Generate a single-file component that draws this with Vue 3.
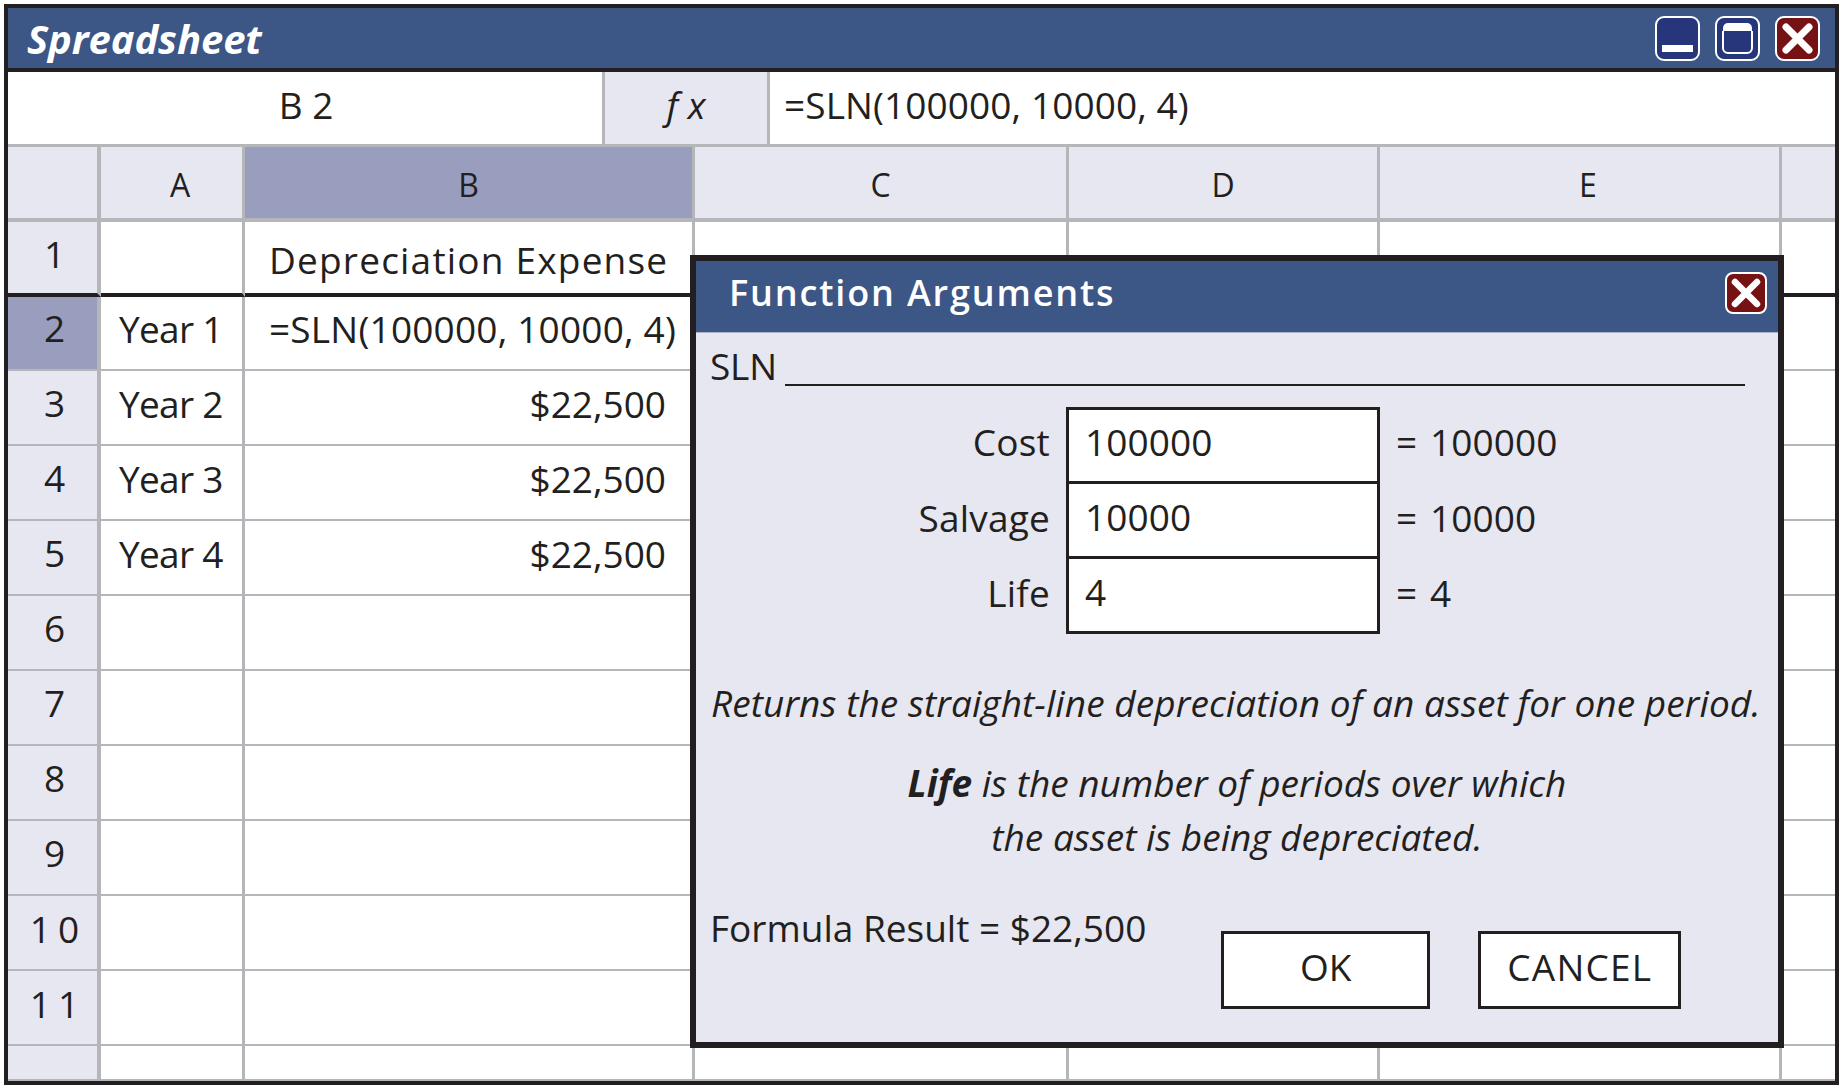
<script setup>
const cols = ['A', 'B', 'C', 'D', 'E', '']
const rows = [
  { n: '1', a: '', b: 'Depreciation Expense', kind: 'head' },
  { n: '2', a: 'Year 1', b: '=SLN(100000, 10000, 4)', kind: 'formula' },
  { n: '3', a: 'Year 2', b: '$22,500', kind: 'value' },
  { n: '4', a: 'Year 3', b: '$22,500', kind: 'value' },
  { n: '5', a: 'Year 4', b: '$22,500', kind: 'value' },
  { n: '6', a: '', b: '', kind: '' },
  { n: '7', a: '', b: '', kind: '' },
  { n: '8', a: '', b: '', kind: '' },
  { n: '9', a: '', b: '', kind: '' },
  { n: '10', a: '', b: '', kind: '' },
  { n: '11', a: '', b: '', kind: '' },
  { n: '', a: '', b: '', kind: '' }
]
const args = [
  { label: 'Cost', value: '100000' },
  { label: 'Salvage', value: '10000' },
  { label: 'Life', value: '4' }
]
</script>

<template>
  <div class="frame">
    <header class="titlebar">
      <span class="title">Spreadsheet</span>
      <div class="winbtns">
        <svg class="winbtn" viewBox="0 0 45 45"><rect x="1" y="1" width="43" height="43" rx="8" fill="#27367a" stroke="#fff" stroke-width="2"/><rect x="7" y="29" width="31" height="7" fill="#fff"/></svg>
        <svg class="winbtn" viewBox="0 0 45 45"><rect x="1" y="1" width="43" height="43" rx="8" fill="#27367a" stroke="#fff" stroke-width="2"/><path d="M8 15V12a5 5 0 0 1 5-5H32a5 5 0 0 1 5 5V15Z" fill="#fff"/><path d="M8 15V32a5 5 0 0 0 5 5H32a5 5 0 0 0 5-5V15" fill="none" stroke="#fff" stroke-width="2"/></svg>
        <svg class="winbtn" viewBox="0 0 45 45"><rect x="1" y="1" width="43" height="43" rx="8" fill="#771214" stroke="#fff" stroke-width="2"/><path d="M11 11L34 34M34 11L11 34" stroke="#fff" stroke-width="7" stroke-linecap="round"/></svg>
      </div>
    </header>

    <div class="formulabar">
      <div class="namebox">B 2</div>
      <div class="fx">f x</div>
      <div class="formula">=SLN(100000, 10000, 4)</div>
    </div>

    <div class="sheet">
      <div class="cell rowhead corner"></div>
      <div
        v-for="c in cols"
        :key="c"
        class="cell colhead"
        :class="{ selected: c === 'B', last: c === '', nudged: c === 'A' || c === 'E' }"
      >{{ c }}</div>

      <template v-for="r in rows" :key="r.n">
        <div class="cell rowhead" :class="{ selected: r.n === '2', first: r.n === '1', wide: r.n.length > 1 }">{{ r.n }}</div>
        <div class="cell body" :class="{ first: r.n === '1', second: r.n === '2' }"><span class="yeartext">{{ r.a }}</span></div>
        <div class="cell body colb" :class="[r.kind, { first: r.n === '1', second: r.n === '2' }]">{{ r.b }}</div>
        <div class="cell body" :class="{ first: r.n === '1' }"></div>
        <div class="cell body" :class="{ first: r.n === '1' }"></div>
        <div class="cell body" :class="{ first: r.n === '1' }"></div>
        <div class="cell body last" :class="{ first: r.n === '1' }"></div>
      </template>
    </div>

    <section class="dialog">
      <header class="dlgtitle">
        <span>Function Arguments</span>
        <svg class="dlgclose" viewBox="0 0 42 42"><rect x="1" y="1" width="40" height="40" rx="7" fill="#771214" stroke="#fff" stroke-width="2"/><path d="M10 10L32 32M32 10L10 32" stroke="#fff" stroke-width="6.5" stroke-linecap="round"/></svg>
      </header>
      <div class="dlgbody">
        <div class="slnrow"><span class="slntext">SLN</span><i class="rule"></i></div>
        <div class="args">
          <template v-for="(a, i) in args" :key="a.label">
            <label class="arglabel">{{ a.label }}</label>
            <div class="argbox" :class="{ notfirst: i > 0 }">{{ a.value }}</div>
            <div class="argval">= {{ a.value }}</div>
          </template>
        </div>
        <p class="desc">Returns the straight-line depreciation of an asset for one period.</p>
        <p class="life"><b>Life</b> is the number of periods over which<br>the asset is being depreciated.</p>
        <div class="footer">
          <span class="result">Formula Result = $22,500</span>
          <div class="actions">
            <button class="btn ok">OK</button>
            <button class="btn cancel">CANCEL</button>
          </div>
        </div>
      </div>
    </section>
  </div>
</template>

<style scoped>
.frame {
  position: relative;
  box-sizing: border-box;
  width: 1835px;
  height: 1081px;
  margin: 4px 0 0 4px;
  border: 4px solid #231f20;
  background: #fff;
  color: #231f20;
  font-family: "Open Sans", "Noto Sans", sans-serif;
  overflow: hidden;
}
.titlebar {
  box-sizing: border-box;
  height: 64px;
  border-bottom: 4px solid #231f20;
  background: #3c5686;
  display: flex;
  align-items: center;
  justify-content: space-between;
  padding: 0 15px 0 19px;
}
.title {
  color: #fff;
  font-size: 40px;
  font-weight: 700;
  font-style: italic;
  letter-spacing: -0.1px;
}
.winbtns { display: flex; gap: 15px; }
.winbtn { width: 45px; height: 45px; display: block; }
.formulabar {
  box-sizing: border-box;
  height: 75px;
  border-bottom: 3px solid #b5b6ba;
  display: flex;
  font-size: 37px;
}
.namebox {
  box-sizing: border-box;
  width: 597px;
  border-right: 3px solid #b5b6ba;
  display: flex;
  align-items: center;
  justify-content: center;
  padding: 0 0 8px 2px;
}
.fx {
  box-sizing: border-box;
  width: 165px;
  border-right: 3px solid #b5b6ba;
  background: #e6e7f1;
  display: flex;
  align-items: center;
  justify-content: center;
  font-style: italic;
  padding-bottom: 8px;
}
.formula {
  display: flex;
  align-items: center;
  padding: 0 0 8px 14px;
  letter-spacing: 0.1px;
}
.sheet {
  display: grid;
  grid-template-columns: 93px 144px 450px 374px 311px 402px 53px;
  grid-template-rows: 75px 75px 74px repeat(9, 75px) 35px;
}
.cell {
  box-sizing: border-box;
  display: flex;
  align-items: center;
  font-size: 37px;
  border-right: 3px solid #b5b6ba;
  border-bottom: 2px solid #b5b6ba;
  min-width: 0;
  white-space: nowrap;
}
.colhead {
  background: #e6e7f1;
  justify-content: center;
  font-size: 32px;
  border-bottom-width: 4px;
  padding-top: 4px;
}
.colhead.nudged { padding-left: 17px; }
.colhead.selected { background: #999dbe; }
.rowhead {
  background: #e6e7f1;
  justify-content: center;
  border-right-width: 4px;
  padding-left: 4px;
  padding-bottom: 10px;
}
.rowhead.corner { border-bottom-width: 4px; padding: 0; }
.rowhead.selected { background: #999dbe; padding-bottom: 12px; }
.rowhead.wide { letter-spacing: 7px; padding-left: 11px; padding-bottom: 8px; }
.rowhead.first { border-bottom: 4px solid #231f20; padding-bottom: 8px; }
.body { padding-bottom: 8px; }
.body.second { padding-bottom: 9px; }
.body.first { border-bottom: 4px solid #231f20; padding-bottom: 0; }
.last { border-right: 0; }
.yeartext { padding-left: 18px; letter-spacing: -0.7px; }
.colb { padding-left: 24px; padding-right: 26px; }
.colb.head { letter-spacing: 1.2px; padding-top: 4px; }
.colb.formula { letter-spacing: 0.2px; padding-left: 24px; }
.colb.value { justify-content: flex-end; letter-spacing: 0; }
.dialog {
  position: absolute;
  left: 682px;
  top: 247px;
  box-sizing: border-box;
  width: 1094px;
  height: 793px;
  border: 6px solid #231f20;
  background: #e6e7f1;
  display: flex;
  flex-direction: column;
}
.dlgtitle {
  box-sizing: border-box;
  height: 72px;
  flex: none;
  background: #3c5686;
  border-bottom: 1px solid #aeb4ca;
  color: #fff;
  display: flex;
  align-items: center;
  justify-content: space-between;
  padding: 0 11px 0 33px;
  font-size: 36px;
  font-weight: 600;
  letter-spacing: 1.85px;
}
.dlgtitle span { margin-bottom: 8px; }
.dlgclose { width: 42px; height: 42px; display: block; margin-bottom: 7px; }
.dlgbody {
  flex: 1;
  display: flex;
  flex-direction: column;
  font-size: 37px;
  padding: 0 14px 0 14px;
}
.slnrow {
  display: flex;
  align-items: flex-end;
  height: 53px;
  gap: 8px;
  letter-spacing: -0.2px;
}
.slntext { line-height: 40px; }
.rule {
  width: 960px;
  height: 2px;
  background: #231f20;
}
.args {
  display: grid;
  grid-template-columns: 356px 314px auto;
  grid-template-rows: 77px 75px 75px;
  margin-top: 21px;
  align-items: stretch;
}
.arglabel {
  display: flex;
  align-items: center;
  justify-content: flex-end;
  padding: 0 16px 8px 0;
  letter-spacing: 0.2px;
}
.argbox {
  box-sizing: border-box;
  background: #fff;
  border: 3px solid #231f20;
  display: flex;
  align-items: center;
  padding: 0 0 8px 16px;
  letter-spacing: 0.1px;
}
.argbox.notfirst { border-top: 0; }
.argval {
  display: flex;
  align-items: center;
  padding: 0 0 8px 16px;
  letter-spacing: 0.1px;
  word-spacing: 3px;
}
.desc {
  margin: 42px 0 0 1px;
  font-style: italic;
  white-space: nowrap;
  letter-spacing: 0.07px;
  line-height: 54px;
}
.life {
  margin: 26px 0 0;
  font-style: italic;
  text-align: center;
  line-height: 54px;
  letter-spacing: 0;
}
.footer {
  display: flex;
  align-items: flex-start;
  margin-top: 37px;
}
.result { line-height: 54px; }
.actions {
  display: flex;
  gap: 48px;
  margin: 30px 0 0 75px;
}
.btn {
  box-sizing: border-box;
  height: 78px;
  background: #fff;
  border: 3px solid #231f20;
  color: #231f20;
  font: inherit;
  padding: 0 0 8px;
}
.ok { width: 209px; }
.cancel { width: 203px; letter-spacing: 1.2px; }
</style>

<style>
html, body { margin: 0; background: #fff; }
</style>
